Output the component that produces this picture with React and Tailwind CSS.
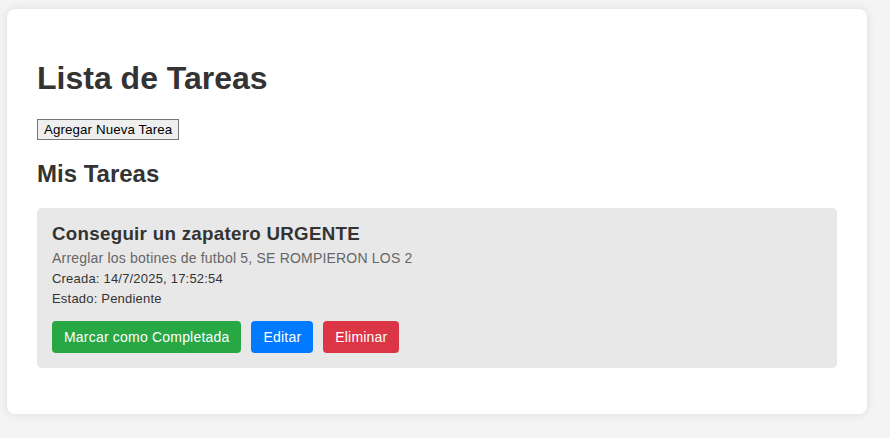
export default function App() {
  return (
    <div className="min-h-screen bg-[#f4f4f4] pl-[7px] pt-[9px] font-['Liberation_Sans',Arial,sans-serif] text-[#333]">
      <div className="w-[860px] rounded-lg bg-white px-[30px] pt-[30px] pb-[46px] shadow-[0_0_10px_rgba(0,0,0,0.1)]">
        <h1 className="mt-[21px] mb-[22px] text-[32px] font-bold leading-[37px]">Lista de Tareas</h1>
        <button
          type="button"
          className="block border border-[#767676] bg-[#efefef] px-[6px] py-[1px] text-[13.33px] leading-[17px] tracking-[0.1px] text-black"
        >
          Agregar Nueva Tarea
        </button>
        <h2 className="my-[20px] text-[24px] font-bold leading-[28px]">Mis Tareas</h2>
        <div className="rounded-[5px] bg-[#e8e8e8] p-[15px]">
          <h3 className="mb-[5px] text-[18.72px] font-bold leading-[22px] tracking-[0.3px]">Conseguir un zapatero URGENTE</h3>
          <p className="my-[5px] text-[14px] leading-[16px] tracking-[0.2px] text-[#666]">
            Arreglar los botines de futbol 5, SE ROMPIERON LOS 2
          </p>
          <p className="my-[5px] text-[13px] leading-[15px] tracking-[0.2px]">Creada: 14/7/2025, 17:52:54</p>
          <p className="my-[5px] text-[13px] leading-[15px] tracking-[0.2px]">Estado: Pendiente</p>
          <div className="mt-[15px] flex gap-[10px]">
            <button type="button" className="rounded bg-[#28a745] px-[12px] py-[8px] text-[14px] leading-[16px] tracking-[0.2px] text-white">
              Marcar como Completada
            </button>
            <button type="button" className="rounded bg-[#007bff] px-[12px] py-[8px] text-[14px] leading-[16px] tracking-[0.2px] text-white">
              Editar
            </button>
            <button type="button" className="rounded bg-[#dc3545] px-[12px] py-[8px] text-[14px] leading-[16px] tracking-[0.2px] text-white">
              Eliminar
            </button>
          </div>
        </div>
      </div>
    </div>
  );
}
